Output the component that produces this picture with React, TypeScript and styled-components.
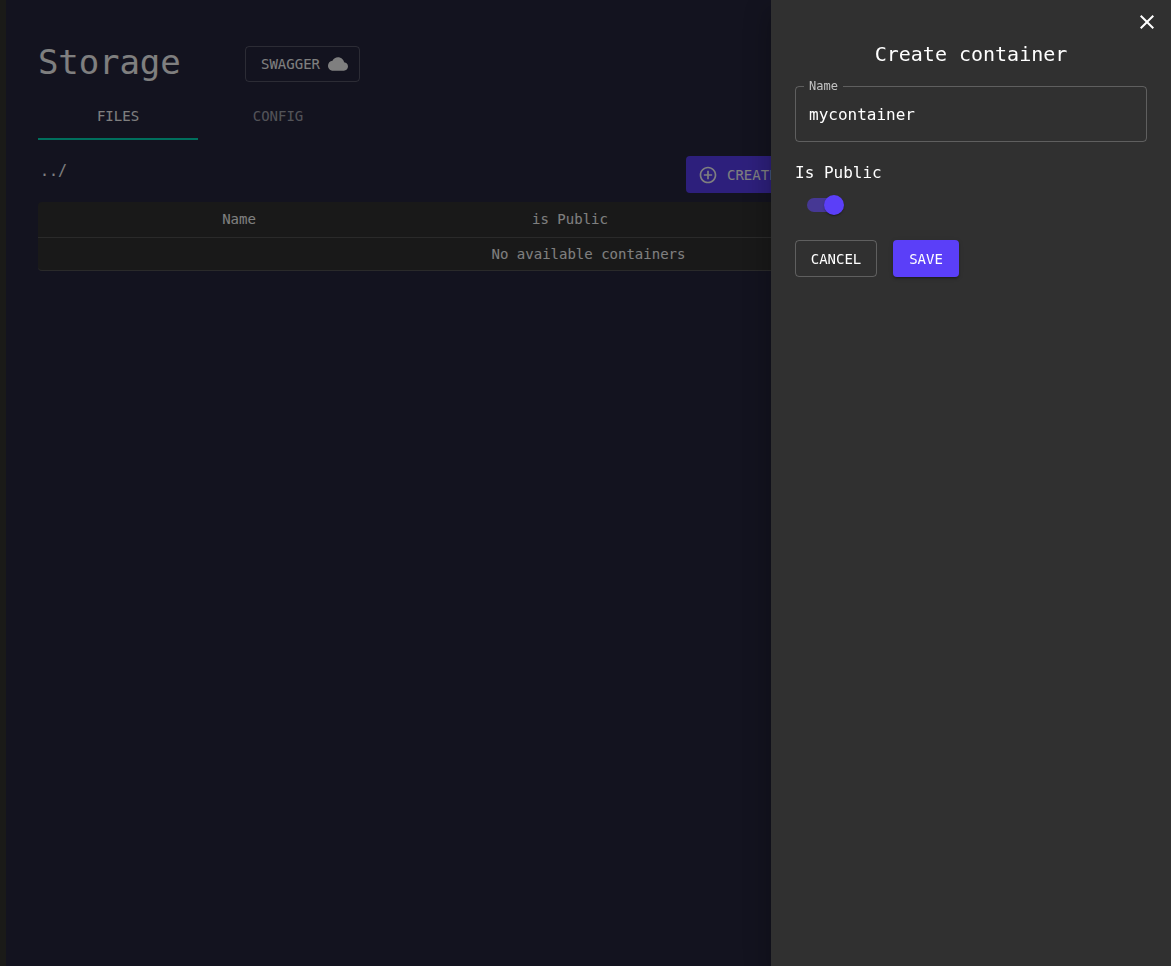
import React from "react";
import styled, { createGlobalStyle } from "styled-components";

const MONO = `"DejaVu Sans Mono", "Liberation Mono", monospace`;

const GlobalStyle = createGlobalStyle`
  html, body {
    margin: 0;
    height: 100%;
    overflow: hidden;
    background: #26263e;
    font-family: ${MONO};
  }
  * {
    box-sizing: border-box;
  }
`;

const Shell = styled.div`
  display: flex;
  width: 1171px;
  height: 966px;
  overflow: hidden;
`;

const Sidebar = styled.aside`
  width: 6px;
  flex-shrink: 0;
  background: #353531;
`;

const Main = styled.main`
  flex: 1;
  padding: 46px 33px 0 32px;
  color: #fff;
`;

const Header = styled.div`
  display: flex;
  align-items: flex-start;
  gap: 65px;
  height: 46px;
`;

const Title = styled.h1`
  margin: 0;
  width: 142px;
  font-size: 34px;
  line-height: 32px;
  font-weight: 400;
  letter-spacing: -0.1px;
  color: #fff;
`;

const SwaggerButton = styled.button`
  display: flex;
  align-items: center;
  gap: 8px;
  height: 36px;
  padding: 0 11px 0 15px;
  background: transparent;
  border: 1px solid rgba(255, 255, 255, 0.23);
  border-radius: 4px;
  color: #fff;
  font-family: ${MONO};
  font-size: 14px;
  font-weight: 500;

  svg {
    width: 20px;
    height: 20px;
    fill: currentColor;
  }
`;

const Tabs = styled.div`
  display: flex;
`;

const Tab = styled.div<{ $active?: boolean }>`
  width: 160px;
  height: 48px;
  padding-top: 2px;
  display: flex;
  align-items: center;
  justify-content: center;
  font-size: 14px;
  font-weight: 500;
  color: ${(props) => (props.$active ? "#fff" : "rgba(255, 255, 255, 0.6)")};
  border-bottom: 2px solid ${(props) => (props.$active ? "#00dfbb" : "transparent")};
`;

const ActionRow = styled.div`
  display: grid;
  grid-template-columns: 648px auto;
  margin-top: 16px;
  height: 37px;
`;

const PathLabel = styled.div`
  padding: 4px 0 0 2px;
  font-size: 15px;
  line-height: 22px;
  color: #fff;
`;

const CreateButton = styled.button`
  display: flex;
  align-items: center;
  gap: 9px;
  width: 300px;
  height: 37px;
  padding: 0 12px;
  background: #5b3ff8;
  border: none;
  border-radius: 4px;
  color: #fff;
  font-family: ${MONO};
  font-size: 14px;
  font-weight: 500;

  svg {
    width: 20px;
    height: 20px;
    fill: currentColor;
  }
`;

const Table = styled.div`
  margin-top: 9px;
  background: #323232;
  border-radius: 4px;
  border-bottom: 1px solid #555;
  font-size: 14px;
`;

const HeadRow = styled.div`
  display: grid;
  grid-template-columns: 402px 260px 1fr;
  height: 36px;
  padding-bottom: 2px;
  align-items: center;
  text-align: center;
  border-bottom: 1px solid #555;
  font-weight: 500;
  color: #fff;
`;

const EmptyRow = styled.div`
  height: 32px;
  padding-left: 1px;
  line-height: 32px;
  text-align: center;
  color: #fff;
`;

const Backdrop = styled.div`
  position: fixed;
  inset: 0;
  background: rgba(0, 0, 0, 0.5);
`;

const Drawer = styled.section`
  position: fixed;
  top: 0;
  right: 0;
  bottom: 0;
  width: 400px;
  display: flex;
  flex-direction: column;
  padding: 0 24px;
  background: #303030;
  color: #fff;
  box-shadow: 0 8px 10px -5px rgba(0, 0, 0, 0.2), 0 16px 24px 2px rgba(0, 0, 0, 0.14),
    0 6px 30px 5px rgba(0, 0, 0, 0.12);
`;

const CloseButton = styled.button`
  position: absolute;
  top: 10px;
  right: 12px;
  width: 24px;
  height: 24px;
  padding: 0;
  background: none;
  border: none;
  color: #fff;

  svg {
    display: block;
    width: 24px;
    height: 24px;
    fill: currentColor;
  }
`;

const DrawerTitle = styled.h2`
  margin: 42px 0 0;
  font-size: 20px;
  line-height: 24px;
  font-weight: 500;
  text-align: center;
`;

const Field = styled.fieldset`
  margin: 14px 0 0;
  height: 62px;
  padding: 0 13px;
  border: 1px solid rgba(255, 255, 255, 0.23);
  border-radius: 4px;
`;

const FieldLegend = styled.legend`
  padding: 0 5px;
  margin-left: -5px;
  font-size: 12px;
  line-height: 12px;
  color: rgba(255, 255, 255, 0.7);
`;

const FieldValue = styled.input`
  display: block;
  width: 100%;
  height: 44px;
  padding: 0;
  background: none;
  border: none;
  outline: none;
  color: #fff;
  font-family: ${MONO};
  font-size: 16px;
`;

const SwitchLabel = styled.div`
  margin-top: 19px;
  font-size: 16px;
  line-height: 24px;
`;

const SwitchTrack = styled.div`
  position: relative;
  width: 34px;
  height: 14px;
  margin: 13px 0 0 12px;
  border-radius: 7px;
  background: rgba(91, 63, 248, 0.5);
`;

const SwitchThumb = styled.span`
  position: absolute;
  top: -3px;
  right: -3px;
  width: 20px;
  height: 20px;
  border-radius: 50%;
  background: #5b3ff8;
  box-shadow: 0 2px 1px -1px rgba(0, 0, 0, 0.2), 0 1px 1px rgba(0, 0, 0, 0.14),
    0 1px 3px rgba(0, 0, 0, 0.12);
`;

const ButtonRow = styled.div`
  display: flex;
  gap: 16px;
  margin-top: 28px;
`;

const FormButton = styled.button<{ $primary?: boolean }>`
  height: 37px;
  width: ${(props) => (props.$primary ? "66px" : "82px")};
  padding: 0;
  border-radius: 4px;
  font-family: ${MONO};
  font-size: 14px;
  font-weight: 500;
  color: #fff;
  background: ${(props) => (props.$primary ? "#5b3ff8" : "transparent")};
  border: ${(props) => (props.$primary ? "none" : "1px solid rgba(255, 255, 255, 0.23)")};
  box-shadow: ${(props) =>
    props.$primary
      ? "0 3px 1px -2px rgba(0,0,0,.2), 0 2px 2px rgba(0,0,0,.14), 0 1px 5px rgba(0,0,0,.12)"
      : "none"};
`;

const CloudIcon = () => (
  <svg viewBox="0 0 24 24">
    <path d="M19.35 10.04C18.67 6.59 15.64 4 12 4 9.11 4 6.64 5.64 5.35 8.04 2.34 8.36 0 10.91 0 14c0 3.31 2.69 6 6 6h13c2.76 0 5-2.24 5-5 0-2.64-2.05-4.78-4.65-4.96z" />
  </svg>
);

const AddCircleIcon = () => (
  <svg viewBox="0 0 24 24">
    <path d="M13 7h-2v4H7v2h4v4h2v-4h4v-2h-4V7zm-1-5C6.48 2 2 6.48 2 12s4.48 10 10 10 10-4.48 10-10S17.52 2 12 2zm0 18c-4.41 0-8-3.59-8-8s3.59-8 8-8 8 3.59 8 8-3.59 8-8 8z" />
  </svg>
);

const CloseIcon = () => (
  <svg viewBox="0 0 24 24">
    <path d="M19 6.41 17.59 5 12 10.59 6.41 5 5 6.41 10.59 12 5 17.59 6.41 19 12 13.41 17.59 19 19 17.59 13.41 12z" />
  </svg>
);

const App: React.FC = () => {
  return (
    <>
      <GlobalStyle />
      <Shell>
        <Sidebar />
        <Main>
          <Header>
            <Title>Storage</Title>
            <SwaggerButton>
              SWAGGER
              <CloudIcon />
            </SwaggerButton>
          </Header>
          <Tabs>
            <Tab $active>FILES</Tab>
            <Tab>CONFIG</Tab>
          </Tabs>
          <ActionRow>
            <PathLabel>../</PathLabel>
            <CreateButton>
              <AddCircleIcon />
              CREATE
            </CreateButton>
          </ActionRow>
          <Table>
            <HeadRow>
              <span>Name</span>
              <span>is Public</span>
              <span />
            </HeadRow>
            <EmptyRow>No available containers</EmptyRow>
          </Table>
        </Main>
      </Shell>
      <Backdrop />
      <Drawer>
        <CloseButton>
          <CloseIcon />
        </CloseButton>
        <DrawerTitle>Create container</DrawerTitle>
        <Field>
          <FieldLegend>Name</FieldLegend>
          <FieldValue defaultValue="mycontainer" />
        </Field>
        <SwitchLabel>Is Public</SwitchLabel>
        <SwitchTrack>
          <SwitchThumb />
        </SwitchTrack>
        <ButtonRow>
          <FormButton>CANCEL</FormButton>
          <FormButton $primary>SAVE</FormButton>
        </ButtonRow>
      </Drawer>
    </>
  );
};

export default App;
